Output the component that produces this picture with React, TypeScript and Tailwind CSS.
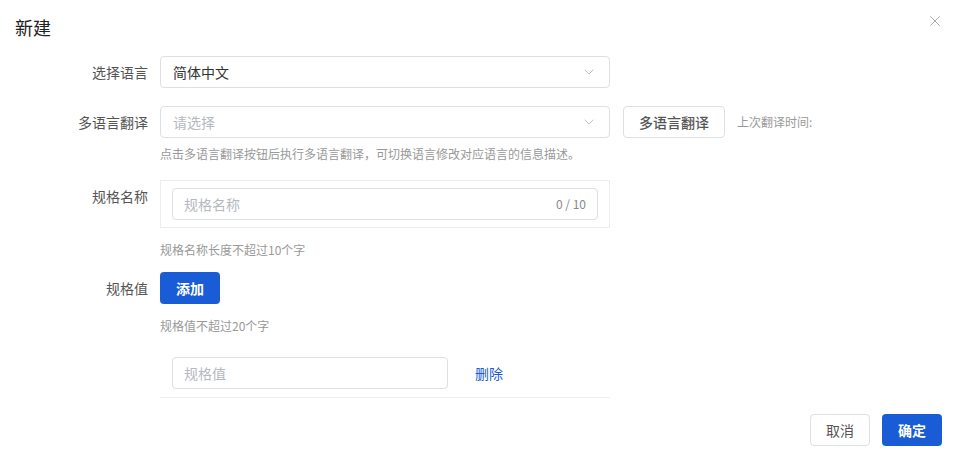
import { ChevronDown, X } from 'lucide-react'

const font = { fontFamily: '"Noto Sans CJK SC", "Noto Sans", sans-serif' }

function Select({ value, placeholder }: { value?: string; placeholder?: string }) {
  return (
    <div className="flex h-8 w-[450px] items-center justify-between rounded border border-[#dcdfe6] bg-white pl-3 pr-3">
      <span className={value ? 'text-sm text-[#333]' : 'text-sm text-[#b5b8bf]'}>{value || placeholder}</span>
      <ChevronDown className="h-4 w-4 text-[#b0b3b8]" strokeWidth={1.2} />
    </div>
  )
}

export default function App() {
  return (
    <div style={font} className="relative h-[462px] w-[956px] bg-white text-[#333]">
      <div className="flex items-center justify-between px-[15px] pt-[15px]">
        <span className="text-[18px] leading-6 text-[#222]">新建</span>
      </div>
      <X className="absolute right-[12px] top-[12px] h-[18px] w-[18px] text-[#999]" strokeWidth={1.1} />

      <div className="mt-[17px] flex flex-col">
        <div className="flex items-center">
          <label className="w-[160px] pr-3 text-right text-sm text-[#555]">选择语言</label>
          <Select value="简体中文" />
        </div>

        <div className="mt-[18px] flex items-center">
          <label className="w-[160px] pr-3 text-right text-sm text-[#555]">多语言翻译</label>
          <Select placeholder="请选择" />
          <button className="ml-[13px] h-8 w-[102px] rounded-sm border border-[#dcdfe6] text-sm font-medium text-[#555]">
            多语言翻译
          </button>
          <span className="ml-[12px] text-xs text-[#999]">上次翻译时间:</span>
        </div>
        <div className="ml-[160px] mt-[6px] text-xs leading-5 text-[#999]">
          点击多语言翻译按钮后执行多语言翻译，可切换语言修改对应语言的信息描述。
        </div>

        <div className="mt-[16px] flex items-start">
          <label className="w-[160px] pr-3 text-right text-sm leading-8 text-[#555]">规格名称</label>
          <div className="w-[450px] border border-[#ebedf0] px-[11px] py-[7px]">
            <div className="flex h-8 items-center justify-between rounded border border-[#dcdfe6] px-[11px]">
              <span className="text-sm text-[#b5b8bf]">规格名称</span>
              <span className="text-xs text-[#888]">0 / 10</span>
            </div>
          </div>
        </div>
        <div className="ml-[160px] mt-[12px] text-xs leading-5 text-[#999]">规格名称长度不超过10个字</div>

        <div className="mt-[12px] flex items-center">
          <label className="w-[160px] pr-3 text-right text-sm text-[#555]">规格值</label>
          <button className="h-8 w-[60px] rounded-sm bg-[#1a5cd6] text-sm font-bold text-white">添加</button>
        </div>
        <div className="ml-[160px] mt-[12px] text-xs leading-5 text-[#999]">规格值不超过20个字</div>

        <div className="ml-[160px] mt-[21px] flex w-[450px] items-center border-b border-[#ebedf0] pb-2 pl-3">
          <div className="flex h-8 w-[276px] items-center rounded border border-[#dcdfe6] px-[11px]">
            <span className="text-sm text-[#b5b8bf]">规格值</span>
          </div>
          <span className="ml-[27px] text-sm text-[#1a5cd6]">删除</span>
        </div>
      </div>

      <div className="mt-4 flex justify-end gap-3 pr-[14px]">
        <button className="h-8 w-[60px] rounded-sm border border-[#dcdfe6] text-sm text-[#555]">取消</button>
        <button className="h-8 w-[60px] rounded-sm bg-[#1a5cd6] text-sm font-bold text-white">确定</button>
      </div>
    </div>
  )
}
